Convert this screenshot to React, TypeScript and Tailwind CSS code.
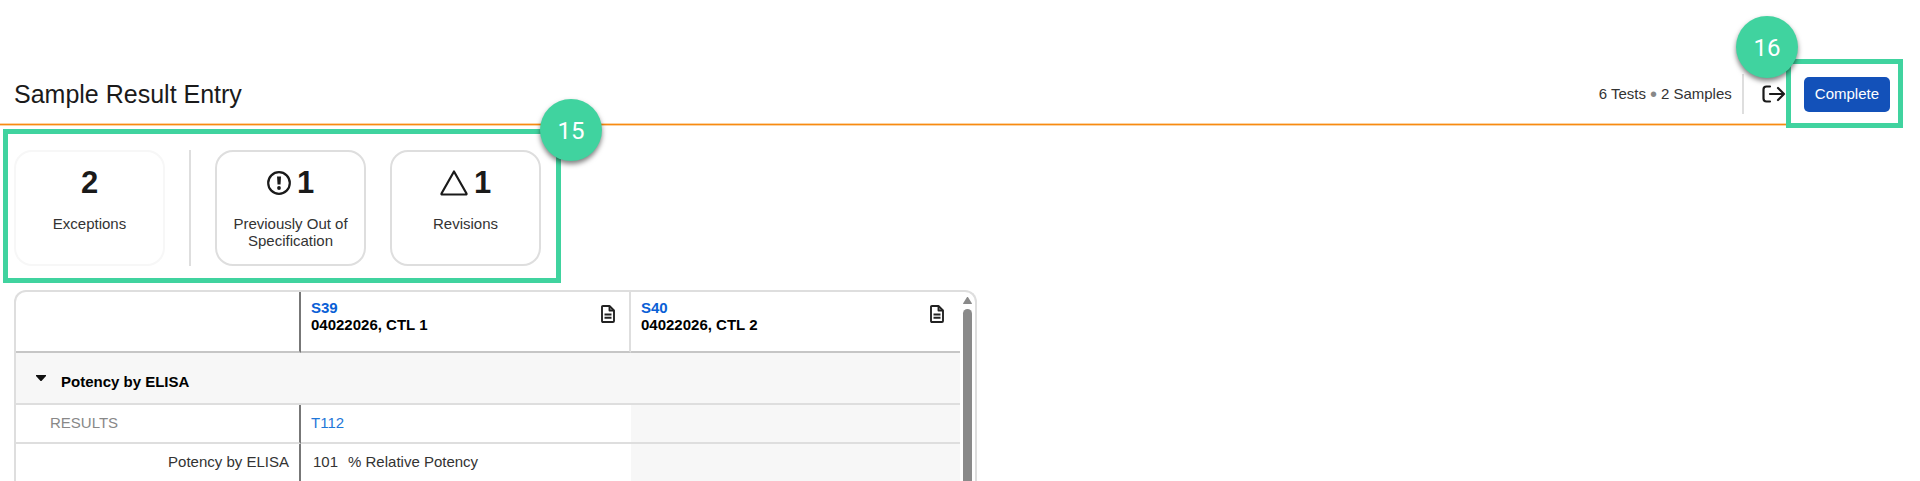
import { ReactNode } from 'react'

interface Sample {
    id: string
    label: string
}

interface StatCardProps {
    count: number
    label: string
    icon?: ReactNode
    muted?: boolean
}

interface CalloutProps {
    step: number
    className: string
    badgeClassName: string
}

const samples: Sample[] = [
    { id: 'S39', label: '04022026, CTL 1' },
    { id: 'S40', label: '04022026, CTL 2' },
]

const AlertIcon = () => (
    <svg width="24" height="24" viewBox="0 0 24 24" aria-hidden="true">
        <circle
            cx="12"
            cy="12"
            r="10.8"
            fill="none"
            stroke="#1a1a1a"
            strokeWidth="2.2"
        />
        <path d="M10 5.500h4l-.5 8h-3z" fill="#1a1a1a" />
        <circle cx="12" cy="17" r="1.9" fill="#1a1a1a" />
    </svg>
)

const TriangleIcon = () => (
    <svg width="28" height="26" viewBox="0 0 28 26" aria-hidden="true">
        <path
            d="M14 1.500 26.500 23.500q.3 1-.8 1H2.300q-1.100 0-.8-1z"
            fill="none"
            stroke="#1a1a1a"
            strokeWidth="2.2"
            strokeLinejoin="round"
        />
    </svg>
)

const NoteIcon = () => (
    <svg
        width="14"
        height="18"
        viewBox="0 0 14 18"
        fill="none"
        stroke="#222"
        strokeWidth="1.9"
        strokeLinejoin="round"
        aria-hidden="true"
    >
        <path d="M2 1h6.500L13 5.500V16q0 1-1 1H2q-1 0-1-1V2q0-1 1-1z" />
        <path d="M8.500 1v4.500H13M3.500 9.500h7M3.500 12.700h7" />
    </svg>
)

const ExitIcon = () => (
    <svg
        width="24"
        height="18"
        viewBox="0 0 24 18"
        fill="none"
        stroke="#1a1a1a"
        strokeWidth="2.2"
        strokeLinecap="round"
        strokeLinejoin="round"
        aria-hidden="true"
    >
        <path d="M8 1.500H4.500q-3 0-3 3v9q0 3 3 3H8" />
        <path d="M8 9h14M16 3l6 6-6 6" />
    </svg>
)

const StatCard = ({ count, label, icon, muted }: StatCardProps) => (
    <button
        type="button"
        className={`flex w-[151px] flex-col items-center rounded-[18px] border-2 px-3 pt-[13px] ${
            muted ? 'border-[#f7f7f7]' : 'border-[#dedede]'
        }`}
    >
        <span className="flex items-center gap-1.5 text-[31px] leading-9 font-bold text-[#1a1a1a]">
            {icon}
            {count}
        </span>
        <span className="mt-3.5 text-[15px] leading-[17px] text-[#333]">
            {label}
        </span>
    </button>
)

// Highlight frame with a numbered badge on one of its corners
const Callout = ({ step, className, badgeClassName }: CalloutProps) => (
    <div
        className={`pointer-events-none absolute border-5 border-[#40d39f] ${className}`}
    >
        <span
            className={`absolute flex size-[62px] items-center justify-center rounded-full bg-[#40d39f] pt-0.5 font-[Roboto,sans-serif] text-2xl text-white shadow-[0_3px_5px_rgba(0,0,0,0.5)] ${badgeClassName}`}
        >
            {step}
        </span>
    </div>
)

const Header = () => (
    <header className="mr-[17px] flex h-[125px] items-end justify-between border-b border-[#f88a12] pr-[13px] pb-2.5 pl-3.5 shadow-[0_1px_0_#fbd3a3,inset_0_-1px_0_#fbd3a3]">
        <h1 className="pb-1 text-[25px] leading-8 text-[#1a1a1a]">
            Sample Result Entry
        </h1>
        <div className="flex h-10 items-center text-[15px] text-[#333]">
            <span className="flex items-center gap-1 pr-2.5">
                6 Tests
                <span className="text-xl leading-4 text-[#888]">•</span>
                2 Samples
            </span>
            <div className="h-full border-l-2 border-[#dedede]" />
            <button type="button" aria-label="Exit" className="mx-[18px]">
                <ExitIcon />
            </button>
            <button
                type="button"
                className="h-[35px] rounded-[5px] bg-[#1351b9] px-[11px] text-white"
            >
                Complete
            </button>
        </div>
    </header>
)

const ResultsTable = () => (
    <div className="mx-3.5 mt-6 flex w-[963px] overflow-hidden rounded-t-xl border-2 border-b-0 border-[#dedede]">
        <table className="flex-1 table-fixed border-separate border-spacing-0 text-left text-[15px] leading-[17px] text-[#333]">
            <colgroup>
                <col className="w-[285px]" />
                <col className="w-[330px]" />
                <col />
            </colgroup>
            <thead>
                <tr className="h-[61px]">
                    <td className="border-r-2 border-b-2 border-r-[#777] border-b-[#c6c6c6]" />
                    {samples.map((sample, index) => (
                        <th
                            key={sample.id}
                            scope="col"
                            className={`border-b-2 border-b-[#c6c6c6] pt-[7px] pl-2.5 align-top ${
                                index === 0
                                    ? 'border-r-2 border-r-[#dedede] pr-3.5'
                                    : 'pr-4'
                            }`}
                        >
                            <div className="flex items-start justify-between">
                                <div className="text-black">
                                    <a href="#" className="block text-[#0a5fd6]">
                                        {sample.id}
                                    </a>
                                    {sample.label}
                                </div>
                                <button
                                    type="button"
                                    aria-label={`Notes for ${sample.id}`}
                                    className="mt-1.5"
                                >
                                    <NoteIcon />
                                </button>
                            </div>
                        </th>
                    ))}
                </tr>
            </thead>
            <tbody>
                <tr className="h-[52px] bg-[#f7f7f7]">
                    <th
                        colSpan={3}
                        scope="colgroup"
                        className="border-b-2 border-[#dedede] pt-1.5 pl-5 text-black"
                    >
                        <button type="button" className="flex gap-[15px]">
                            <svg
                                width="10"
                                height="6"
                                viewBox="0 0 10 6"
                                className="mt-0.5"
                                aria-hidden="true"
                            >
                                <path d="M0 0h10v1L5.500 6h-1L0 1z" fill="#111" />
                            </svg>
                            Potency by ELISA
                        </button>
                    </th>
                </tr>
                <tr className="h-[39px]">
                    <th
                        scope="row"
                        className="border-r-2 border-b-2 border-r-[#777] border-b-[#dedede] pb-0.5 pl-[34px] font-normal text-[#888]"
                    >
                        RESULTS
                    </th>
                    <td className="border-b-2 border-[#dedede] pb-0.5 pl-2.5">
                        <a href="#" className="text-[#1f77d8]">
                            T112
                        </a>
                    </td>
                    <td className="border-b-2 border-[#dedede] bg-[#f7f7f7]" />
                </tr>
                <tr className="h-[38px]">
                    <th
                        scope="row"
                        className="border-r-2 border-b border-r-[#777] border-b-[#dedede] pr-2.5 pb-0.5 text-right font-normal"
                    >
                        Potency by ELISA
                    </th>
                    <td className="border-b border-[#dedede] pb-0.5 pl-3">
                        <span className="mr-2.5">101</span>% Relative Potency
                    </td>
                    <td className="border-b border-[#dedede] bg-[#f7f7f7]" />
                </tr>
            </tbody>
        </table>
        <div className="flex w-[15px] flex-col items-center pt-[5px]">
            <svg width="9" height="7" viewBox="0 0 10 8" aria-hidden="true">
                <path d="M4.500 0h1L10 7v1H0V7z" fill="#8a8a8a" />
            </svg>
            <div className="mt-[5px] w-[9px] flex-1 rounded-t-full bg-[#8a8a8a]" />
        </div>
    </div>
)

const App = () => (
    <div className="relative overflow-hidden bg-white font-['Liberation_Sans',Arial,sans-serif]">
        <Header />
        <section className="flex h-[141px] gap-6 pt-[25px] pl-3.5">
            <StatCard count={2} label="Exceptions" muted />
            <div className="border-l-2 border-[#dedede]" />
            <StatCard
                count={1}
                label="Previously Out of Specification"
                icon={<AlertIcon />}
            />
            <StatCard count={1} label="Revisions" icon={<TriangleIcon />} />
        </section>
        <ResultsTable />
        <Callout
            step={15}
            className="top-[129px] left-[3px] h-[154px] w-[558px]"
            badgeClassName="-top-[35px] -right-[46px]"
        />
        <Callout
            step={16}
            className="top-[59px] right-[17px] h-[69px] w-[117px]"
            badgeClassName="-top-[48px] -left-[55px]"
        />
    </div>
)

export default App
